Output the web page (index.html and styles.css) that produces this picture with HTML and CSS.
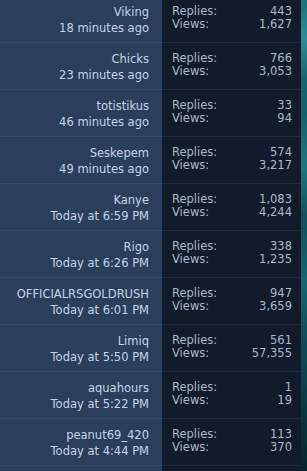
FILE: index.html
```html
<!DOCTYPE html>
<html>
<head>
<meta charset="utf-8">
<link rel="stylesheet" href="styles.css">
</head>
<body>
<div class="page">
  <div class="list">
    <div class="row"><div class="last"><div class="user">Viking</div><div class="time">18 minutes ago</div></div><div class="stats"><dl><dt>Replies:</dt><dd>443</dd></dl><dl><dt>Views:</dt><dd>1,627</dd></dl></div></div>
    <div class="row"><div class="last"><div class="user">Chicks</div><div class="time">23 minutes ago</div></div><div class="stats"><dl><dt>Replies:</dt><dd>766</dd></dl><dl><dt>Views:</dt><dd>3,053</dd></dl></div></div>
    <div class="row"><div class="last"><div class="user">totistikus</div><div class="time">46 minutes ago</div></div><div class="stats"><dl><dt>Replies:</dt><dd>33</dd></dl><dl><dt>Views:</dt><dd>94</dd></dl></div></div>
    <div class="row"><div class="last"><div class="user">Seskepem</div><div class="time">49 minutes ago</div></div><div class="stats"><dl><dt>Replies:</dt><dd>574</dd></dl><dl><dt>Views:</dt><dd>3,217</dd></dl></div></div>
    <div class="row"><div class="last"><div class="user">Kanye</div><div class="time">Today at 6:59 PM</div></div><div class="stats"><dl><dt>Replies:</dt><dd>1,083</dd></dl><dl><dt>Views:</dt><dd>4,244</dd></dl></div></div>
    <div class="row"><div class="last"><div class="user">Rigo</div><div class="time">Today at 6:26 PM</div></div><div class="stats"><dl><dt>Replies:</dt><dd>338</dd></dl><dl><dt>Views:</dt><dd>1,235</dd></dl></div></div>
    <div class="row"><div class="last"><div class="user">OFFICIALRSGOLDRUSH</div><div class="time">Today at 6:01 PM</div></div><div class="stats"><dl><dt>Replies:</dt><dd>947</dd></dl><dl><dt>Views:</dt><dd>3,659</dd></dl></div></div>
    <div class="row"><div class="last"><div class="user">Limiq</div><div class="time">Today at 5:50 PM</div></div><div class="stats"><dl><dt>Replies:</dt><dd>561</dd></dl><dl><dt>Views:</dt><dd>57,355</dd></dl></div></div>
    <div class="row"><div class="last"><div class="user">aquahours</div><div class="time">Today at 5:22 PM</div></div><div class="stats"><dl><dt>Replies:</dt><dd>1</dd></dl><dl><dt>Views:</dt><dd>19</dd></dl></div></div>
    <div class="row"><div class="last"><div class="user">peanut69_420</div><div class="time">Today at 4:44 PM</div></div><div class="stats"><dl><dt>Replies:</dt><dd>113</dd></dl><dl><dt>Views:</dt><dd>370</dd></dl></div></div>
    <div class="row tail"><div class="last"></div><div class="stats"></div></div>
  </div>
  <div class="backdrop"></div>
</div>
</body>
</html>
```
FILE: styles.css
```css
html, body {
  margin: 0;
  padding: 0;
  height: 100%;
  overflow: hidden;
  background: #0c3a44;
}
.page {
  display: flex;
  height: 100%;
  font-family: "DejaVu Sans", Verdana, sans-serif;
  font-size: 11.5px;
}
.list {
  width: 301px;
  flex: none;
  margin-top: -4px;
  display: flex;
  flex-direction: column;
}
.row {
  display: grid;
  grid-template-columns: 162px 139px;
  flex: none;
}
.row.tail {
  flex: 1;
}
.tail .last, .tail .stats {
  border-bottom: 0;
  padding: 0;
}
.last {
  background: #2a3f5a;
  border-bottom: 1px solid #364c67;
  padding: 8px 13px 6px 0;
  text-align: right;
  color: #c6d4e8;
  line-height: 16px;
  white-space: nowrap;
}
.stats {
  background: #111b29;
  border-bottom: 1px solid #1f2b3b;
  display: flex;
  flex-direction: column;
  justify-content: center;
  padding: 0 9px 2px 10px;
  color: #aab8ca;
  line-height: 13.5px;
}
dl {
  margin: 0;
  display: flex;
  justify-content: space-between;
}
dt, dd {
  margin: 0;
}
.backdrop {
  flex: 1;
  background:
    radial-gradient(circle at 60% 8%, rgba(60, 170, 185, 0.55) 0, rgba(60,170,185,0) 40px),
    radial-gradient(circle at 30% 35%, rgba(40, 150, 165, 0.5) 0, rgba(40,150,165,0) 50px),
    radial-gradient(circle at 70% 60%, rgba(30, 130, 150, 0.45) 0, rgba(30,130,150,0) 60px),
    linear-gradient(180deg, #1a6f7c 0%, #11535e 45%, #0e4a55 75%, #06242b 100%);
}
```
